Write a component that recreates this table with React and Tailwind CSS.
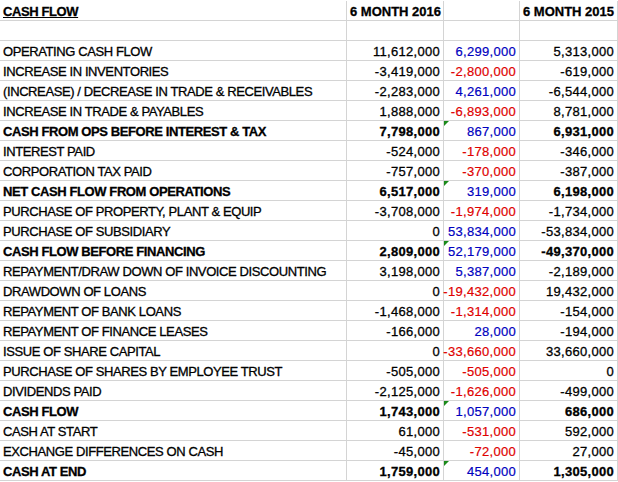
const rows = [
  ["OPERATING CASH FLOW", "11,612,000", "6,299,000", "5,313,000"],
  ["INCREASE IN INVENTORIES", "-3,419,000", "-2,800,000", "-619,000"],
  ["(INCREASE) / DECREASE IN TRADE & RECEIVABLES", "-2,283,000", "4,261,000", "-6,544,000"],
  ["INCREASE IN TRADE & PAYABLES", "1,888,000", "-6,893,000", "8,781,000"],
  ["CASH FROM OPS BEFORE INTEREST & TAX", "7,798,000", "867,000", "6,931,000", true],
  ["INTEREST PAID", "-524,000", "-178,000", "-346,000"],
  ["CORPORATION TAX PAID", "-757,000", "-370,000", "-387,000"],
  ["NET CASH FLOW FROM OPERATIONS", "6,517,000", "319,000", "6,198,000", true],
  ["PURCHASE OF PROPERTY, PLANT & EQUIP", "-3,708,000", "-1,974,000", "-1,734,000"],
  ["PURCHASE OF SUBSIDIARY", "0", "53,834,000", "-53,834,000"],
  ["CASH FLOW BEFORE FINANCING", "2,809,000", "52,179,000", "-49,370,000", true],
  ["REPAYMENT/DRAW DOWN OF INVOICE DISCOUNTING", "3,198,000", "5,387,000", "-2,189,000"],
  ["DRAWDOWN OF LOANS", "0", "-19,432,000", "19,432,000"],
  ["REPAYMENT OF BANK LOANS", "-1,468,000", "-1,314,000", "-154,000"],
  ["REPAYMENT OF FINANCE LEASES", "-166,000", "28,000", "-194,000"],
  ["ISSUE OF SHARE CAPITAL", "0", "-33,660,000", "33,660,000"],
  ["PURCHASE OF SHARES BY EMPLOYEE TRUST", "-505,000", "-505,000", "0"],
  ["DIVIDENDS PAID", "-2,125,000", "-1,626,000", "-499,000"],
  ["CASH FLOW", "1,743,000", "1,057,000", "686,000", true],
  ["CASH AT START", "61,000", "-531,000", "592,000"],
  ["EXCHANGE DIFFERENCES ON CASH", "-45,000", "-72,000", "27,000"],
  ["CASH AT END", "1,759,000", "454,000", "1,305,000", true],
];

const cell = "h-5 border-b border-r border-[#d4d4d4] flex items-end pb-px px-[3px] whitespace-nowrap";
const heavy = " [-webkit-text-stroke:0.3px_currentColor]";
const num = " justify-end tracking-[0.3px]";

export default function App() {
  return (
    <div
      className="w-[618px] h-[482px] bg-white pt-px text-[13px] leading-[15px] text-black"
      style={{ fontFamily: '"Liberation Sans", Arial, sans-serif' }}
    >
      <div className="grid grid-cols-[347px_97px_76px_98px]">
        <div className={cell + " tracking-[-0.4px]"}>
          <span className={"font-bold underline" + heavy}>CASH FLOW</span>
        </div>
        <div className={cell + " font-bold" + heavy}>6 MONTH 2016</div>
        <div className={cell}></div>
        <div className={cell + " font-bold" + heavy}>6 MONTH 2015</div>

        <div className={cell}></div>
        <div className={cell}></div>
        <div className={cell}></div>
        <div className={cell}></div>

        {rows.map(([label, a, b, c, bold], i) => (
          <div key={i} className="contents">
            <div className={cell + " tracking-[-0.4px]" + heavy + (bold ? " font-bold" : "")}>
              {label}
            </div>
            <div className={cell + num + heavy + (bold ? " font-bold" : "")}>{a}</div>
            <div
              className={
                cell +
                num +
                " relative [-webkit-text-stroke:0.2px_currentColor] " +
                (b.startsWith("-") ? "text-[#e00000]" : "text-[#0000c0]")
              }
            >
              {bold && (
                <span className="absolute left-0 top-0 w-0 h-0 border-t-[5px] border-r-[5px] border-t-[#1a8a1a] border-r-transparent" />
              )}
              {b}
            </div>
            <div className={cell + num + heavy + (bold ? " font-bold" : "")}>{c}</div>
          </div>
        ))}
      </div>
    </div>
  );
}
